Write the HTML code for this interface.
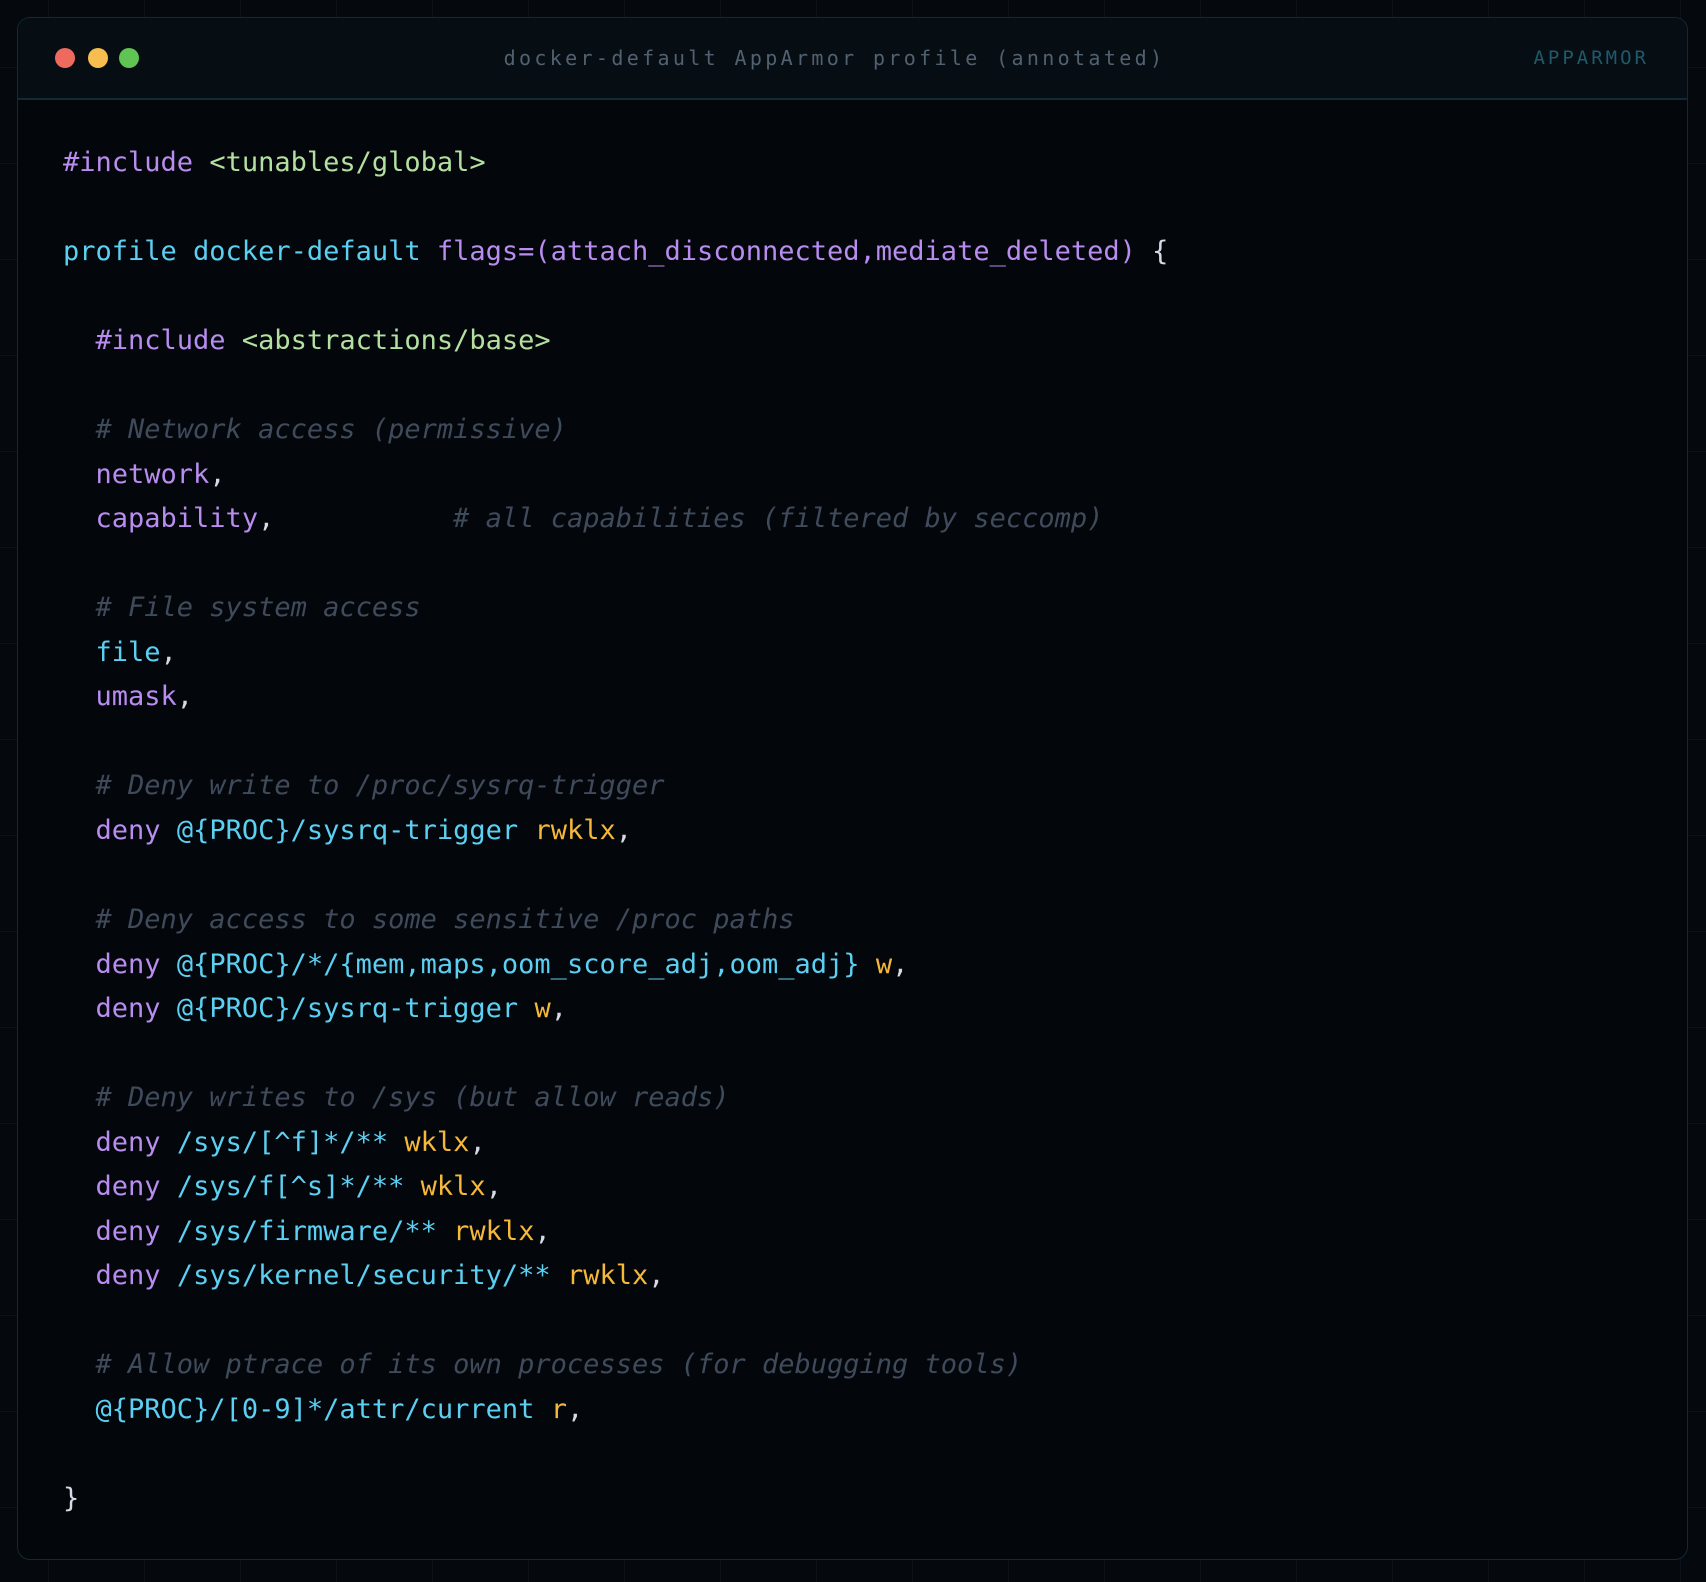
<!DOCTYPE html>
<html><head><meta charset="utf-8"><style>
html,body{margin:0;padding:0}
body{width:1706px;height:1582px;background-color:#05080d;
background-image:linear-gradient(to right,#0c121a 1px,transparent 1px),linear-gradient(to bottom,#0c121a 1px,transparent 1px);
background-size:96px 96px;background-position:48px 67px;position:relative;overflow:hidden}
.win{position:absolute;left:17px;top:17px;width:1669px;height:1541px;border:1px solid #112a33;border-radius:13px;background:#03060b;overflow:hidden}
.hd{position:absolute;left:0;top:0;right:0;height:80px;background:#060d13;border-bottom:2px solid #0f2a33}
.dot{position:absolute;top:30px;width:20px;height:20px;border-radius:50%}
.title{position:absolute;left:-36px;right:0;top:28px;text-align:center;font:20px "DejaVu Sans Mono","Liberation Mono",monospace;letter-spacing:3.35px;color:#52616f}
.tag{position:absolute;right:38px;top:29px;font:19px "DejaVu Sans Mono","Liberation Mono",monospace;letter-spacing:3px;color:#1f5a6c}
pre{position:absolute;left:45px;top:123px;margin:0;font:27px/44.53px "DejaVu Sans Mono","Liberation Mono",monospace;color:#d5dbe4}
.p{color:#b98cf0}.g{color:#b3e0a0}.c{color:#5cd0f2}.y{color:#f5b83a}.m{color:#3f4a5a;font-style:italic}
</style></head><body>
<div class="win">
<div class="hd">
<div class="dot" style="left:37px;background:#ef6a5e"></div>
<div class="dot" style="left:70px;background:#f6bd4f"></div>
<div class="dot" style="left:101px;background:#5fc453"></div>
<div class="title">docker-default AppArmor profile (annotated)</div>
<div class="tag">APPARMOR</div>
</div>
<pre><span class="p">#include</span> <span class="g">&lt;tunables/global&gt;</span>

<span class="c">profile docker-default</span> <span class="p">flags=(attach_disconnected,mediate_deleted)</span> {

  <span class="p">#include</span> <span class="g">&lt;abstractions/base&gt;</span>

  <span class="m"># Network access (permissive)</span>
  <span class="p">network</span>,
  <span class="p">capability</span>,           <span class="m"># all capabilities (filtered by seccomp)</span>

  <span class="m"># File system access</span>
  <span class="c">file</span>,
  <span class="p">umask</span>,

  <span class="m"># Deny write to /proc/sysrq-trigger</span>
  <span class="p">deny</span> <span class="c">@{PROC}/sysrq-trigger</span> <span class="y">rwklx</span>,

  <span class="m"># Deny access to some sensitive /proc paths</span>
  <span class="p">deny</span> <span class="c">@{PROC}/*/{mem,maps,oom_score_adj,oom_adj}</span> <span class="y">w</span>,
  <span class="p">deny</span> <span class="c">@{PROC}/sysrq-trigger</span> <span class="y">w</span>,

  <span class="m"># Deny writes to /sys (but allow reads)</span>
  <span class="p">deny</span> <span class="c">/sys/[^f]*/**</span> <span class="y">wklx</span>,
  <span class="p">deny</span> <span class="c">/sys/f[^s]*/**</span> <span class="y">wklx</span>,
  <span class="p">deny</span> <span class="c">/sys/firmware/**</span> <span class="y">rwklx</span>,
  <span class="p">deny</span> <span class="c">/sys/kernel/security/**</span> <span class="y">rwklx</span>,

  <span class="m"># Allow ptrace of its own processes (for debugging tools)</span>
  <span class="c">@{PROC}/[0-9]*/attr/current</span> <span class="y">r</span>,

}</pre>
</div>
</body></html>
